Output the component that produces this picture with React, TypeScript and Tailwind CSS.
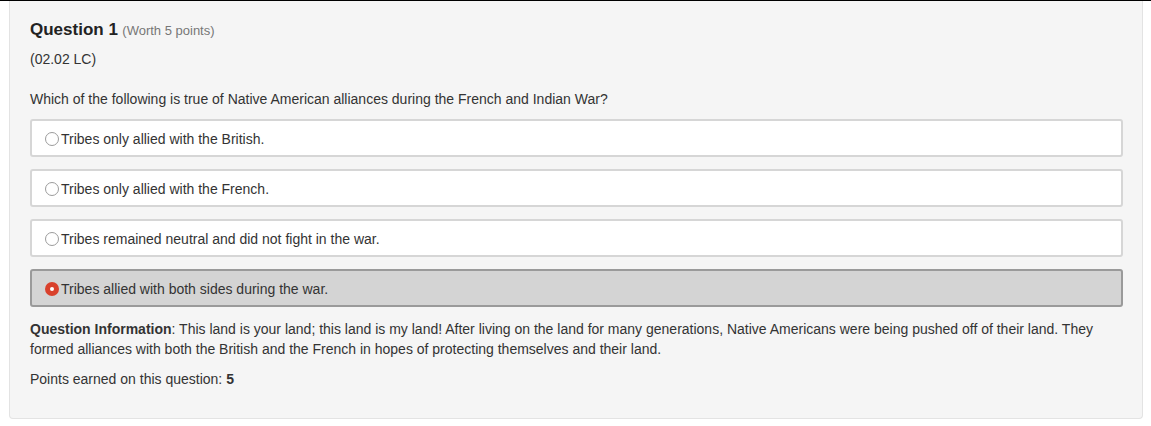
import React from 'react';

const options = [
  'Tribes only allied with the British.',
  'Tribes only allied with the French.',
  'Tribes remained neutral and did not fight in the war.',
  'Tribes allied with both sides during the war.',
];

const selected = 3;

export default function App() {
  return (
    <div className="min-h-[426px] bg-white text-[#333] font-['Liberation_Sans',Arial,sans-serif]">
      <div className="h-px bg-black" />
      <div className="ml-[9px] mr-[8px] bg-[#f5f5f5] border border-t-0 border-[#e3e3e3] rounded-b-[4px] pl-5 pr-[19px] pt-[17px] pb-[29px]">
        {/* Header */}
        <div className="leading-6">
          <span className="text-[17px] font-bold text-[#222]">Question 1</span>{' '}
          <span className="text-[13px] text-[#777]">(Worth 5 points)</span>
        </div>
        <div className="mt-[6px] text-[14px] leading-5">(02.02 LC)</div>
        <div className="mt-5 text-[14px] leading-5">
          Which of the following is true of Native American alliances during the French and Indian War?
        </div>

        {/* Options */}
        <div className="mt-[10px] flex flex-col gap-3">
          {options.map((opt, i) => {
            const on = i === selected;
            return (
              <label
                key={opt}
                className={
                  on
                    ? 'flex items-center h-[38px] pl-[13px] pt-[2px] rounded-[3px] border-2 border-[#9a9a9a] bg-[#d4d4d4] text-[14px]'
                    : 'flex items-center h-[38px] pl-[13px] pt-[2px] rounded-[3px] border-2 border-[#d6d6d6] bg-white text-[14px]'
                }
              >
                {on ? (
                  <span className="w-[14px] h-[14px] rounded-full bg-[#d9412c] flex items-center justify-center mr-[2px]">
                    <span className="w-[4px] h-[4px] rounded-full bg-white" />
                  </span>
                ) : (
                  <span className="w-[14px] h-[14px] rounded-full border border-[#9c9c9c] bg-white mr-[2px]" />
                )}
                <span>{opt}</span>
              </label>
            );
          })}
        </div>

        {/* Info */}
        <p className="mt-3 text-[14px] leading-5">
          <span className="font-bold">Question Information</span>: This land is your land; this land is my land! After living on the land for many generations, Native Americans were being pushed off of their land. They formed alliances with both the British and the French in hopes of protecting themselves and their land.
        </p>
        <p className="mt-[10px] text-[14px] leading-5">
          Points earned on this question: <span className="font-bold">5</span>
        </p>
      </div>
    </div>
  );
}
